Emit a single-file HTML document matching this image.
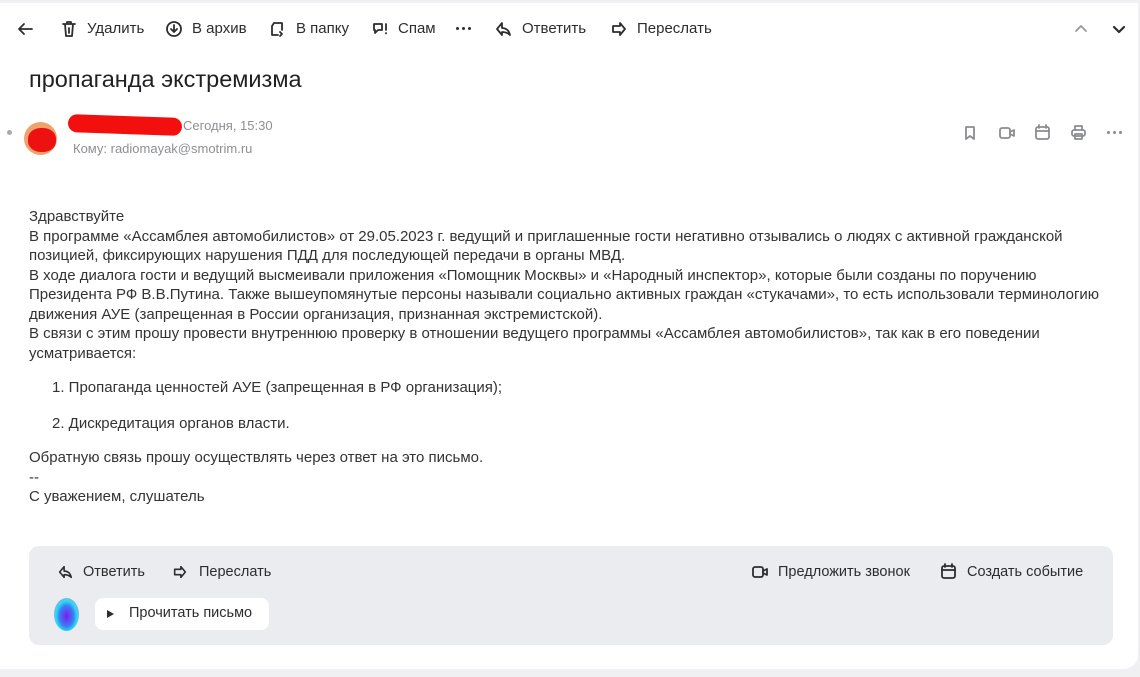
<!DOCTYPE html>
<html><head><meta charset="utf-8"><style>
*{margin:0;padding:0;box-sizing:border-box}
body{width:1140px;height:677px;background:#f0f0f2;font-family:"Liberation Sans",Arial,sans-serif;color:#2c2d2e;position:relative;overflow:hidden}
.card{position:absolute;left:0;top:3px;width:1138px;height:666px;background:#fff;border-radius:0 0 14px 0}
.a{position:absolute;white-space:nowrap}
.tb{font-size:15px;color:#2c2d2e}
svg{position:absolute;fill:none;stroke:#2c2d2e;stroke-width:1.8;stroke-linecap:round;stroke-linejoin:round}
.g svg{stroke:#8a8c90}
.body{position:absolute;left:29px;top:207px;font-size:15px;line-height:19.5px;color:#333}
.body div{white-space:nowrap}
.foot{position:absolute;left:29px;top:546px;width:1084px;height:99px;background:#ebecef;border-radius:10px}
.dots{position:absolute;display:flex;gap:3px}
.dots i{display:block;width:3px;height:3px;border-radius:50%;background:#2c2d2e}
</style></head><body>
<div class="card"></div>
<svg style="left:16px;top:20px" width="18" height="18" viewBox="0 0 18 18"><path d="M16 9H3M8 4L3 9l5 5"/></svg>
<svg style="left:61px;top:20px" width="16" height="18" viewBox="0 0 16 18"><path d="M2 4h12M6 4V2h4v2M4 4l1 12h6l1-12M8 8v5"/></svg>
<div class="a tb" style="left:87px;top:20px">Удалить</div>
<svg style="left:165px;top:20px" width="18" height="18" viewBox="0 0 18 18"><circle cx="9" cy="9" r="7"/><path d="M9 5v6M6 9l3 3 3-3"/></svg>
<div class="a tb" style="left:192px;top:20px">В архив</div>
<svg style="left:269px;top:20px" width="18" height="18" viewBox="0 0 18 18"><path d="M5 3h8v7M3 6v9h6M11 12l2 2-2 2M3 6l2-3"/></svg>
<div class="a tb" style="left:296px;top:20px">В папку</div>
<svg style="left:371px;top:20px" width="18" height="18" viewBox="0 0 18 18"><path d="M3 4h8v6H7l-3 3v-3H3zM15 4v6M15 13v.5"/></svg>
<div class="a tb" style="left:398px;top:20px">Спам</div>
<div class="dots" style="left:456px;top:27px"><i></i><i></i><i></i></div>
<svg style="left:494px;top:20px" width="18" height="18" viewBox="0 0 18 18"><path d="M8 3L3 9l5 6v-3c4 0 6 1 8 3-1-4-3-7-8-7z"/></svg>
<div class="a tb" style="left:522px;top:20px">Ответить</div>
<svg style="left:610px;top:20px" width="18" height="18" viewBox="0 0 18 18"><path d="M10 3l5 6-5 6v-3H3V6h7z"/></svg>
<div class="a tb" style="left:637px;top:20px">Переслать</div>
<svg style="left:1074px;top:22px;stroke:#999" width="14" height="14" viewBox="0 0 14 14"><path d="M2 9l5-5 5 5"/></svg>
<svg style="left:1112px;top:22px;stroke-width:2.2" width="14" height="14" viewBox="0 0 14 14"><path d="M2 5l5 5 5-5"/></svg>
<div class="a" style="left:29px;top:66px;font-size:23.5px;color:#1f2022">пропаганда экстремизма</div>
<div class="a" style="left:7px;top:130px;width:5px;height:5px;border-radius:50%;background:#aaa"></div>
<div class="a" style="left:24px;top:122px;width:33px;height:33px;border-radius:50%;background:#f0a26e"></div>
<div class="a" style="left:28px;top:128px;width:28px;height:24px;border-radius:45%;background:#ee1111"></div>
<div class="a" style="left:68px;top:116px;width:114px;height:18px;border-radius:9px;background:#f40f0f;transform:rotate(2deg)"></div>
<div class="a" style="left:183px;top:118px;font-size:13px;color:#8d8f93">Сегодня, 15:30</div>
<div class="a" style="left:73px;top:141px;font-size:13px;color:#8d8f93">Кому: radiomayak@smotrim.ru</div>
<div class="g">
<svg style="left:962px;top:125px" width="16" height="16" viewBox="0 0 16 16"><path d="M4 2h8v12l-4-3-4 3z"/></svg>
<svg style="left:998px;top:125px" width="18" height="16" viewBox="0 0 18 16"><rect x="2" y="3" width="10" height="10" rx="2"/><path d="M12 7l4-2v6l-4-2"/></svg>
<svg style="left:1034px;top:124px" width="17" height="17" viewBox="0 0 17 17"><rect x="2" y="3" width="13" height="12" rx="2"/><path d="M2 7h13M5 1v3M12 1v3"/></svg>
<svg style="left:1070px;top:124px" width="17" height="17" viewBox="0 0 17 17"><rect x="2" y="6" width="13" height="6" rx="2"/><path d="M5 6V2h7v4M5 10h7v5H5z"/></svg>
</div>
<div class="dots" style="left:1107px;top:131px"><i style="background:#8a8c90"></i><i style="background:#8a8c90"></i><i style="background:#8a8c90"></i></div>
<div class="body">
<div>Здравствуйте</div>
<div>В программе «Ассамблея автомобилистов» от 29.05.2023 г. ведущий и приглашенные гости негативно отзывались о людях с активной гражданской</div>
<div>позицией, фиксирующих нарушения ПДД для последующей передачи в органы МВД.</div>
<div>В ходе диалога гости и ведущий высмеивали приложения «Помощник Москвы» и «Народный инспектор», которые были созданы по поручению</div>
<div>Президента РФ В.В.Путина. Также вышеупомянутые персоны называли социально активных граждан «стукачами», то есть использовали терминологию</div>
<div>движения АУЕ (запрещенная в России организация, признанная экстремистской).</div>
<div>В связи с этим прошу провести внутреннюю проверку в отношении ведущего программы «Ассамблея автомобилистов», так как в его поведении</div>
<div>усматривается:</div>
<div style="margin-top:15px;padding-left:23px">1. Пропаганда ценностей АУЕ (запрещенная в РФ организация);</div>
<div style="margin-top:16px;padding-left:23px">2. Дискредитация органов власти.</div>
<div style="margin-top:15px">Обратную связь прошу осуществлять через ответ на это письмо.</div>
<div>--</div>
<div>С уважением, слушатель</div>
</div>
<div class="foot"></div>
<svg style="left:57px;top:564px" width="16" height="16" viewBox="0 0 18 18"><path d="M8 3L3 9l5 6v-3c4 0 6 1 8 3-1-4-3-7-8-7z"/></svg>
<div class="a tb" style="left:83px;top:564px;font-size:14.5px">Ответить</div>
<svg style="left:172px;top:564px" width="16" height="16" viewBox="0 0 18 18"><path d="M10 3l5 6-5 6v-3H3V6h7z"/></svg>
<div class="a tb" style="left:199px;top:564px;font-size:14.5px">Переслать</div>
<svg style="left:751px;top:564px" width="18" height="16" viewBox="0 0 18 16"><rect x="2" y="3" width="10" height="10" rx="2"/><path d="M12 7l4-2v6l-4-2"/></svg>
<div class="a tb" style="left:778px;top:564px;font-size:14.5px">Предложить звонок</div>
<svg style="left:940px;top:563px" width="17" height="17" viewBox="0 0 17 17"><rect x="2" y="3" width="13" height="12" rx="2"/><path d="M2 7h13M5 1v3M12 1v3"/></svg>
<div class="a tb" style="left:967px;top:564px;font-size:14.5px">Создать событие</div>
<div class="a" style="left:54px;top:598px;width:25px;height:33px;border-radius:50%;background:radial-gradient(ellipse at 50% 55%,#7a1cf0 0%,#3c7cf5 40%,#28e0f0 60%,#f070d8 85%);"></div>
<div class="a" style="left:95px;top:598px;width:174px;height:32px;background:#fff;border-radius:8px"></div>
<div class="a" style="left:107px;top:610px;width:0;height:0;border-left:7px solid #2c2d2e;border-top:4.5px solid transparent;border-bottom:4.5px solid transparent"></div>
<div class="a tb" style="left:129px;top:605px;font-size:14.5px">Прочитать письмо</div>
</body></html>
